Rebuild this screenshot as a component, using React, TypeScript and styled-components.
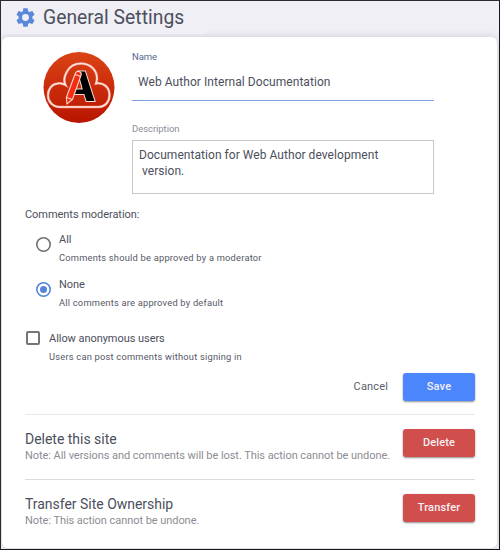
import React from "react";
import styled, { createGlobalStyle, css } from "styled-components";

const GlobalStyle = createGlobalStyle`
  * { box-sizing: border-box; }
  body { margin: 0; }
  button, input, textarea { font-family: inherit; }
`;

const Page = styled.div`
  width: 500px;
  height: 550px;
  border: 1px solid #2b2930;
  border-right-color: #17161b;
  border-bottom-color: #17161b;
  background: #efeff5;
  font-family: Roboto, sans-serif;
  color: #4c4f5c;
  overflow: hidden;
`;

const Header = styled.header`
  display: flex;
  align-items: center;
  height: 33px;
  width: 205px;
  padding-left: 13px;
  gap: 6px;
  background: #efeff5;
  position: relative;
  z-index: 1;
`;

const Title = styled.h1`
  margin: 0;
  font-size: 19.3px;
  font-weight: 400;
  line-height: 22px;
  letter-spacing: 0.03px;
  white-space: nowrap;
`;

const Card = styled.main`
  margin: 3px 2px 0 1px;
  height: 511px;
  padding: 14px 22px 0 23px;
  border-radius: 6px;
  background: #fff;
  box-shadow: 0 0 7px 1px #d3d2da;
`;

const Profile = styled.section`
  display: flex;
  height: 157px;
`;

const Logo = styled.svg`
  width: 72px;
  height: 72px;
  margin: 0 17px 0 18px;
  flex: none;
`;

const Fields = styled.div`
  width: 302px;
`;

const Label = styled.label<{ $active?: boolean }>`
  display: block;
  font-size: 9.5px;
  line-height: 12px;
  letter-spacing: -0.06px;
  color: ${(p) => (p.$active ? "#55698f" : "#8a8d9a")};
`;

const NameInput = styled.div`
  height: 38px;
  margin-bottom: 22px;
  padding: 10px 6px 0;
  border-bottom: 1px solid #7d9fdc;
  font-size: 12px;
  line-height: 18px;
  letter-spacing: 0.06px;
  white-space: nowrap;
`;

const DescriptionInput = styled.div`
  height: 54px;
  margin-top: 5px;
  padding: 6px;
  border: 1px solid #c8c8ca;
  font-size: 12px;
  line-height: 16px;
  letter-spacing: 0.06px;
  word-spacing: -0.1px;
  white-space: pre;
`;

const GroupTitle = styled.div`
  height: 25px;
  font-size: 11px;
  line-height: 14px;
  letter-spacing: -0.05px;
`;

const Option = styled.div<{ $kind: "radio" | "check" }>`
  display: flex;
  ${(p) =>
    p.$kind === "radio"
      ? css`
          height: 45px;
          padding-left: 11px;
          gap: 8px;
        `
      : css`
          height: 41px;
          margin-top: 9px;
          padding-left: 1px;
          gap: 9px;
        `}
`;

const Radio = styled.span<{ $checked?: boolean }>`
  width: 15px;
  height: 15px;
  margin-top: 4px;
  flex: none;
  display: grid;
  place-items: center;
  border-radius: 50%;
  box-shadow: inset 0 0 0 1.6px ${(p) => (p.$checked ? "#5585d8" : "#707074")};
  &::after {
    content: "";
    width: 7px;
    height: 7px;
    border-radius: 50%;
    background: ${(p) => (p.$checked ? "#5585d8" : "transparent")};
  }
`;

const Checkbox = styled.span`
  width: 14px;
  height: 14px;
  margin-top: -1px;
  flex: none;
  border: 2px solid #757578;
  border-radius: 2px;
`;

const OptionLabel = styled.div`
  font-size: 11px;
  line-height: 14px;
  letter-spacing: -0.05px;
`;

const OptionHint = styled.div`
  margin-top: 5px;
  font-size: 9.3px;
  line-height: 12px;
  letter-spacing: 0.22px;
  color: #555866;
`;

const Actions = styled.div`
  display: flex;
  align-items: center;
  justify-content: flex-end;
  height: 28px;
  gap: 15px;
`;

const Button = styled.button<{ $tone: "plain" | "primary" | "danger" }>`
  height: 28px;
  padding: 0;
  border: 0;
  font-size: 11px;
  line-height: 26px;
  letter-spacing: 0.15px;
  flex: none;
  ${(p) =>
    p.$tone === "plain"
      ? css`
          background: none;
          color: #5d606d;
        `
      : css`
          width: 72px;
          border-radius: 3px;
          font-weight: 500;
          color: #f5f0f5;
          background: ${p.$tone === "primary" ? "#4c86fc" : "#d04e4c"};
          box-shadow: 0 1px 2px rgba(0, 0, 0, 0.45);
        `}
`;

const SiteAction = styled.section<{ $first?: boolean }>`
  display: flex;
  justify-content: space-between;
  height: 65px;
  margin-top: ${(p) => (p.$first ? "13px" : "0")};
  padding-top: 14px;
  border-top: 1px solid ${(p) => (p.$first ? "#e9e9eb" : "#dcdcde")};
`;

const ActionTitle = styled.h2`
  margin: 1px 0 0;
  font-size: 14px;
  font-weight: 400;
  line-height: 18px;
  letter-spacing: -0.02px;
  white-space: nowrap;
`;

const ActionNote = styled.p`
  margin: 0;
  font-size: 11px;
  line-height: 15px;
  letter-spacing: -0.055px;
  color: #8c8d93;
  white-space: nowrap;
`;

const Gear = () => (
  <svg width="23" height="23" viewBox="0 0 24 24" fill="#5b88d8">
    <path d="M19.14 12.94c.04-.3.06-.61.06-.94 0-.32-.02-.64-.07-.94l2.03-1.58a.49.49 0 0 0 .12-.61l-1.92-3.32a.488.488 0 0 0-.59-.22l-2.39.96c-.5-.38-1.03-.7-1.62-.94l-.36-2.54a.484.484 0 0 0-.48-.41h-3.84c-.24 0-.43.17-.47.41l-.36 2.54c-.59.24-1.13.57-1.62.94l-2.39-.96c-.22-.08-.47 0-.59.22L2.74 8.87c-.12.21-.08.47.12.61l2.03 1.58c-.05.3-.09.63-.09.94s.02.64.07.94l-2.03 1.58a.49.49 0 0 0-.12.61l1.92 3.32c.12.22.37.29.59.22l2.39-.96c.5.38 1.03.7 1.62.94l.36 2.54c.05.24.24.41.48.41h3.84c.24 0 .44-.17.47-.41l.36-2.54c.59-.24 1.13-.56 1.62-.94l2.39.96c.22.08.47 0 .59-.22l1.92-3.32c.12-.22.07-.47-.12-.61l-2.01-1.58zM12 15.6A3.6 3.6 0 1 1 12 8.4a3.6 3.6 0 0 1 0 7.2z" />
  </svg>
);

const SiteLogo = () => (
  <Logo viewBox="0 0 72 72">
    <defs>
      <linearGradient id="disc" x1="0" y1="0" x2="0" y2="1">
        <stop offset="0" stopColor="#db4416" />
        <stop offset="1" stopColor="#b81400" />
      </linearGradient>
    </defs>
    <circle cx="36" cy="36.500" r="35.500" fill="url(#disc)" />
    <path
      d="M17 56C10 56 5 51 5 44.500C5 38 9 33 14.500 32.500C17 32 20 32.500 22.500 34C20 29 22 24 24 20.500C27 15 32 12.500 38 12.500C47 12.500 54 19 54 27.500C54 29.500 53.500 31 53 32.500C60 31 66.500 36 66.500 44C66.500 51 62 56 55 56Z"
      fill="none"
      stroke="#f08a75"
      strokeWidth="2.600"
    />
    <path
      d="M17 56C10 56 5 51 5 44.500C5 38 9 33 14.500 32.500C17 32 20 32.500 22.500 34C20 29 22 24 24 20.500C27 15 32 12.500 38 12.500C47 12.500 54 19 54 27.500C54 29.500 53.500 31 53 32.500C60 31 66.500 36 66.500 44C66.500 51 62 56 55 56Z"
      fill="none"
      stroke="#fbe3df"
      strokeWidth="1.500"
    />
    <path
      d="M35.500 20.500H42L51.500 50H43.500L41.300 43H31.500V38.500H39.800L37 28Z"
      fill="#000"
      stroke="#f5ded8"
      strokeWidth="2"
      paintOrder="stroke"
    />
    <path
      d="M32.500 22Q33.500 20 36 20.500Q38.500 21.300 38.300 23.500L29.500 48.500L24 53L23.300 46.500Z"
      fill="#f52c12"
      stroke="#ffd9d0"
      strokeWidth="1.100"
    />
    <path d="M32 23.500L37.800 25.500M23.700 46.500L29.200 48.500" stroke="#ffd9d0" strokeWidth="1.100" />
  </Logo>
);

export default function App() {
  return (
    <>
      <GlobalStyle />
      <Page>
        <Header>
          <Gear />
          <Title>General Settings</Title>
        </Header>
        <Card>
          <Profile>
            <SiteLogo />
            <Fields>
              <Label $active>Name</Label>
              <NameInput>Web Author Internal Documentation</NameInput>
              <Label>Description</Label>
              <DescriptionInput>{"Documentation for Web Author development\n version."}</DescriptionInput>
            </Fields>
          </Profile>
          <GroupTitle>Comments moderation:</GroupTitle>
          <Option $kind="radio">
            <Radio />
            <div>
              <OptionLabel>All</OptionLabel>
              <OptionHint>Comments should be approved by a moderator</OptionHint>
            </div>
          </Option>
          <Option $kind="radio">
            <Radio $checked />
            <div>
              <OptionLabel>None</OptionLabel>
              <OptionHint>All comments are approved by default</OptionHint>
            </div>
          </Option>
          <Option $kind="check">
            <Checkbox />
            <div>
              <OptionLabel>Allow anonymous users</OptionLabel>
              <OptionHint>Users can post comments without signing in</OptionHint>
            </div>
          </Option>
          <Actions>
            <Button $tone="plain">Cancel</Button>
            <Button $tone="primary">Save</Button>
          </Actions>
          <SiteAction $first>
            <div>
              <ActionTitle>Delete this site</ActionTitle>
              <ActionNote>Note: All versions and comments will be lost. This action cannot be undone.</ActionNote>
            </div>
            <Button $tone="danger">Delete</Button>
          </SiteAction>
          <SiteAction>
            <div>
              <ActionTitle>Transfer Site Ownership</ActionTitle>
              <ActionNote>Note: This action cannot be undone.</ActionNote>
            </div>
            <Button $tone="danger">Transfer</Button>
          </SiteAction>
        </Card>
      </Page>
    </>
  );
}
